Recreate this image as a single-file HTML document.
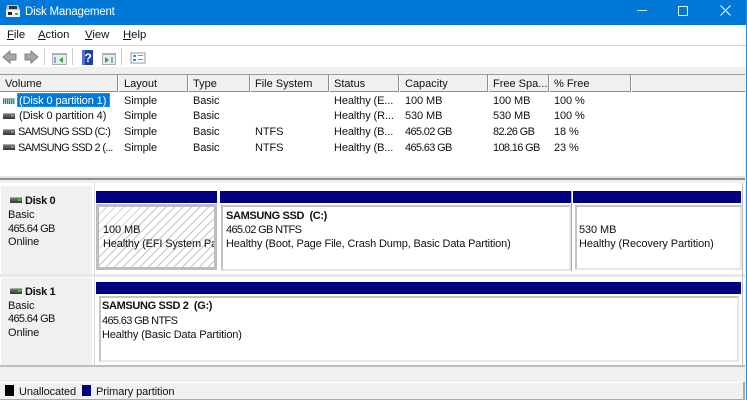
<!DOCTYPE html>
<html><head><meta charset="utf-8"><style>
html,body{margin:0;padding:0;width:747px;height:400px;overflow:hidden;background:#f0f0f0}
body{position:relative;font:11px/14px "Liberation Sans",sans-serif;letter-spacing:-.1px;color:#111}
div,span.t{position:absolute}
.t{white-space:nowrap}
.h{top:77px;height:16px;line-height:15px;font-size:11px;letter-spacing:0}
.sep{top:75px;width:1px;height:17px;background:#8e8e8e;border-right:1px solid #fff}
.b{font-weight:bold;letter-spacing:-.35px}
.up{letter-spacing:-.65px}
.n{letter-spacing:-.65px}
.bar{background:#000080;height:12px}
.drv{width:12px;height:5px;background:linear-gradient(#777,#333);border-top:1px solid #aaa}
.drv:after{content:"";position:absolute;right:1px;top:1px;width:3px;height:2px;background:#3c3}
.p{border:solid;border-color:#c4c4c4 #e6e6e6 #e6e6e6 #c4c4c4;border-width:2px;background:#fff}
</style></head><body>
<!-- title -->
<div style="left:0;top:0;width:747px;height:25px;background:#0078d7"></div>
<svg style="position:absolute;left:5px;top:4px" width="16" height="14" viewBox="0 0 16 14"><path d="M2 1h11l2 5H1z" fill="#b9c6d3"/><rect x="1" y="6" width="14" height="7" fill="#eef2f5"/><rect x="4" y="2" width="8" height="3" fill="#333"/><rect x="3" y="8" width="4" height="3" fill="#222"/><rect x="10" y="9" width="3" height="2" fill="#3b3"/></svg>
<span class="t" style="left:25px;top:5px;color:#fff;font-size:11.5px;letter-spacing:-.2px">Disk Management</span>
<div style="left:637px;top:10px;width:10px;height:1px;background:#cfe4f7"></div>
<div style="left:678px;top:6px;width:8px;height:8px;border:1px solid #e5f1fb"></div>
<svg style="position:absolute;left:720px;top:5px" width="11" height="11"><path d="M.5.5l10 10M10.500.5l-10 10" stroke="#fff" fill="none"/></svg>
<!-- menu -->
<div style="left:0;top:25px;width:746px;height:20px;background:#fff"></div>
<div style="left:0;top:45px;width:746px;height:1px;background:#d4d4d4"></div>
<span class="t" style="left:7px;top:28px;font-size:11.3px;letter-spacing:0"><u>F</u>ile</span>
<span class="t" style="left:38px;top:28px;font-size:11.3px;letter-spacing:0"><u>A</u>ction</span>
<span class="t" style="left:85px;top:28px;font-size:11.3px;letter-spacing:0"><u>V</u>iew</span>
<span class="t" style="left:123px;top:28px;font-size:11.3px;letter-spacing:0"><u>H</u>elp</span>
<!-- toolbar -->
<div style="left:0;top:46px;width:746px;height:21px;background:#fff"></div>
<div style="left:0;top:67px;width:746px;height:8px;background:#f0f0f0"></div>
<svg style="position:absolute;left:0;top:46px" width="160" height="21">
<path d="M3 11l7-6v3h6v6h-6v3z" fill="#a6a6a6" stroke="#808080"/>
<path d="M38 11l-7-6v3h-6v6h6v3z" fill="#a6a6a6" stroke="#808080"/>
<rect x="44" y="2" width="1" height="17" fill="#ccc"/>
<rect x="52.500" y="7.500" width="14" height="11" fill="#e6ecf1" stroke="#a8b0b6"/><rect x="52" y="7" width="15" height="2" fill="#b0b0b0"/><path d="M63 11v6l-4-3z" fill="#3a3"/><rect x="54" y="11" width="2" height="6" fill="#8ab"/>
<rect x="72" y="2" width="1" height="17" fill="#ccc"/>
<rect x="82" y="4" width="11" height="15" fill="#1c3fa8"/><rect x="82" y="4" width="3" height="15" fill="#5470c8"/>
<text x="84.500" y="16" font-family="Liberation Sans" font-weight="bold" font-size="12" fill="#fff">?</text>
<rect x="102.500" y="7.500" width="13" height="11" fill="#e6ecf1" stroke="#a8b0b6"/><rect x="102" y="7" width="14" height="2" fill="#b0b0b0"/><path d="M105 11v6l4-3z" fill="#3a3"/><rect x="111" y="11" width="2" height="6" fill="#8ab"/>
<rect x="121" y="2" width="1" height="17" fill="#ccc"/>
<rect x="131" y="7" width="14" height="10" fill="#fff" stroke="#8a9aa8"/><rect x="133" y="9" width="3" height="2" fill="#39c"/><rect x="133" y="13" width="3" height="2" fill="#39c"/><rect x="138" y="9" width="5" height="1" fill="#888"/><rect x="138" y="13" width="5" height="1" fill="#888"/>
</svg>
<!-- list header -->
<div style="left:0;top:74px;width:745px;height:1px;background:#9a9a9a"></div>
<div style="left:0;top:75px;width:745px;height:16px;background:#f0f0f0"></div>
<div style="left:0;top:91px;width:745px;height:1px;background:#8e8e8e"></div>
<div class="sep" style="left:117px"></div><div class="sep" style="left:187px"></div><div class="sep" style="left:249px"></div><div class="sep" style="left:328px"></div><div class="sep" style="left:398px"></div><div class="sep" style="left:487px"></div><div class="sep" style="left:548px"></div><div class="sep" style="left:630px"></div>
<span class="t h" style="left:5px">Volume</span><span class="t h" style="left:124px">Layout</span><span class="t h" style="left:193px">Type</span><span class="t h" style="left:255px">File System</span><span class="t h" style="left:334px">Status</span><span class="t h" style="left:405px">Capacity</span><span class="t h" style="left:493px">Free Spa...</span><span class="t h" style="left:554px">% Free</span>
<!-- list -->
<div style="left:0;top:92px;width:745px;height:84px;background:#fff"></div>
<div style="left:17px;top:93px;width:93px;height:14px;background:#0078d7;outline:1px dotted #d98c3c;outline-offset:-1px"></div>
<div class="drv" style="left:3px;top:98px;background:repeating-linear-gradient(90deg,#2f78b5 0 1px,#a8c8e0 1px 2px)"></div>
<div class="drv" style="left:3px;top:113px"></div><div class="drv" style="left:3px;top:129px"></div><div class="drv" style="left:3px;top:144px"></div>
<span class="t" style="left:19px;top:94px;color:#fff">(Disk 0 partition 1)</span>
<span class="t" style="left:19px;top:109px">(Disk 0 partition 4)</span>
<span class="t up" style="left:18px;top:125px">SAMSUNG SSD (C:)</span>
<span class="t up" style="left:18px;top:141px">SAMSUNG SSD 2 (...</span>
<span class="t" style="left:124px;top:94px">Simple</span><span class="t" style="left:124px;top:109px">Simple</span><span class="t" style="left:124px;top:125px">Simple</span><span class="t" style="left:124px;top:141px">Simple</span>
<span class="t" style="left:193px;top:94px">Basic</span><span class="t" style="left:193px;top:109px">Basic</span><span class="t" style="left:193px;top:125px">Basic</span><span class="t" style="left:193px;top:141px">Basic</span>
<span class="t" style="left:255px;top:125px">NTFS</span><span class="t" style="left:255px;top:141px">NTFS</span>
<span class="t" style="left:334px;top:94px">Healthy (E...</span><span class="t" style="left:334px;top:109px">Healthy (R...</span><span class="t" style="left:334px;top:125px">Healthy (B...</span><span class="t" style="left:334px;top:141px">Healthy (B...</span>
<span class="t" style="left:405px;top:94px">100 MB</span><span class="t" style="left:405px;top:109px">530 MB</span><span class="t n" style="left:405px;top:125px">465.02 GB</span><span class="t n" style="left:405px;top:141px">465.63 GB</span>
<span class="t" style="left:493px;top:94px">100 MB</span><span class="t" style="left:493px;top:109px">530 MB</span><span class="t n" style="left:493px;top:125px">82.26 GB</span><span class="t n" style="left:493px;top:141px">108.16 GB</span>
<span class="t" style="left:554px;top:94px">100 %</span><span class="t" style="left:554px;top:109px">100 %</span><span class="t" style="left:554px;top:125px">18 %</span><span class="t" style="left:554px;top:141px">23 %</span>
<div style="left:0;top:176px;width:745px;height:2px;background:#e4e4e4"></div>
<div style="left:0;top:178px;width:745px;height:2px;background:#8f8f8f"></div>
<!-- lower pane -->
<div style="left:0;top:183px;width:745px;height:184px;background:#fff"></div>
<!-- disk 0 label -->
<div style="left:1px;top:186px;width:91px;height:88px;background:#f0f0f0;border-bottom:1px solid #ccc"></div>
<div style="left:94px;top:183px;width:1px;height:183px;background:#d8d8d8"></div>
<div class="drv" style="left:10px;top:197px"></div>
<span class="t b" style="left:25px;top:194px">Disk 0</span>
<span class="t" style="left:8px;top:208px">Basic</span><span class="t n" style="left:8px;top:222px">465.64 GB</span><span class="t" style="left:8px;top:235px">Online</span>
<div class="bar" style="left:96px;top:191px;width:121px"></div>
<div class="bar" style="left:220px;top:191px;width:351px"></div>
<div class="bar" style="left:573px;top:191px;width:168px"></div>
<div style="left:96px;top:204px;width:115px;height:60px;border:3px solid #bdbdbd;background:repeating-linear-gradient(135deg,#fff 0 5px,#c4c4c4 5px 6px)"></div>
<div class="p" style="left:221px;top:205px;width:346px;height:62px"></div>
<div style="left:571px;top:191px;width:1px;height:80px;background:#aaa"></div>
<div class="p" style="left:575px;top:205px;width:163px;height:61px"></div>
<span class="t" style="left:103px;top:223px">100 MB</span>
<span class="t" style="left:103px;top:237px;width:111px;overflow:hidden;letter-spacing:-.15px">Healthy (EFI System Partition)</span>
<span class="t b" style="left:226px;top:209px">SAMSUNG SSD&nbsp; (C:)</span>
<span class="t n" style="left:226px;top:223px">465.02 GB NTFS</span>
<span class="t" style="left:226px;top:237px;letter-spacing:-.15px">Healthy (Boot, Page File, Crash Dump, Basic Data Partition)</span>
<span class="t" style="left:579px;top:223px">530 MB</span>
<span class="t" style="left:579px;top:237px">Healthy (Recovery Partition)</span>
<div style="left:0;top:274px;width:745px;height:3px;background:#e8e8e8"></div>
<!-- disk 1 -->
<div style="left:1px;top:278px;width:91px;height:87px;background:#f0f0f0"></div>
<div class="drv" style="left:10px;top:288px"></div>
<span class="t b" style="left:25px;top:285px">Disk 1</span>
<span class="t" style="left:8px;top:299px">Basic</span><span class="t n" style="left:8px;top:312px">465.64 GB</span><span class="t" style="left:8px;top:326px">Online</span>
<div class="bar" style="left:96px;top:282px;width:645px"></div>
<div class="p" style="left:99px;top:296px;width:636px;height:62px"></div>
<span class="t b" style="left:102px;top:299px">SAMSUNG SSD 2&nbsp; (G:)</span>
<span class="t n" style="left:102px;top:314px">465.63 GB NTFS</span>
<span class="t" style="left:102px;top:328px;letter-spacing:-.15px">Healthy (Basic Data Partition)</span>
<div style="left:0;top:365px;width:745px;height:2px;background:#bdbdbd"></div>
<div style="left:742px;top:183px;width:1px;height:183px;background:#bdbdbd"></div>
<!-- status -->
<div style="left:0;top:367px;width:745px;height:33px;background:#f0f0f0"></div>
<div style="left:0;top:382px;width:745px;height:1px;background:#fff"></div>
<div style="left:5px;top:385px;width:9px;height:11px;background:#000"></div>
<span class="t" style="left:19px;top:385px">Unallocated</span>
<div style="left:82px;top:385px;width:9px;height:11px;background:#000080"></div>
<span class="t" style="left:96px;top:385px">Primary partition</span>
<div style="left:743px;top:382px;width:2px;height:18px;background:#aaa"></div>
<div style="left:0;top:399px;width:745px;height:1px;background:#aaa"></div>
<div style="left:746px;top:0;width:1px;height:400px;background:#2b8fe0"></div>
</body></html>
